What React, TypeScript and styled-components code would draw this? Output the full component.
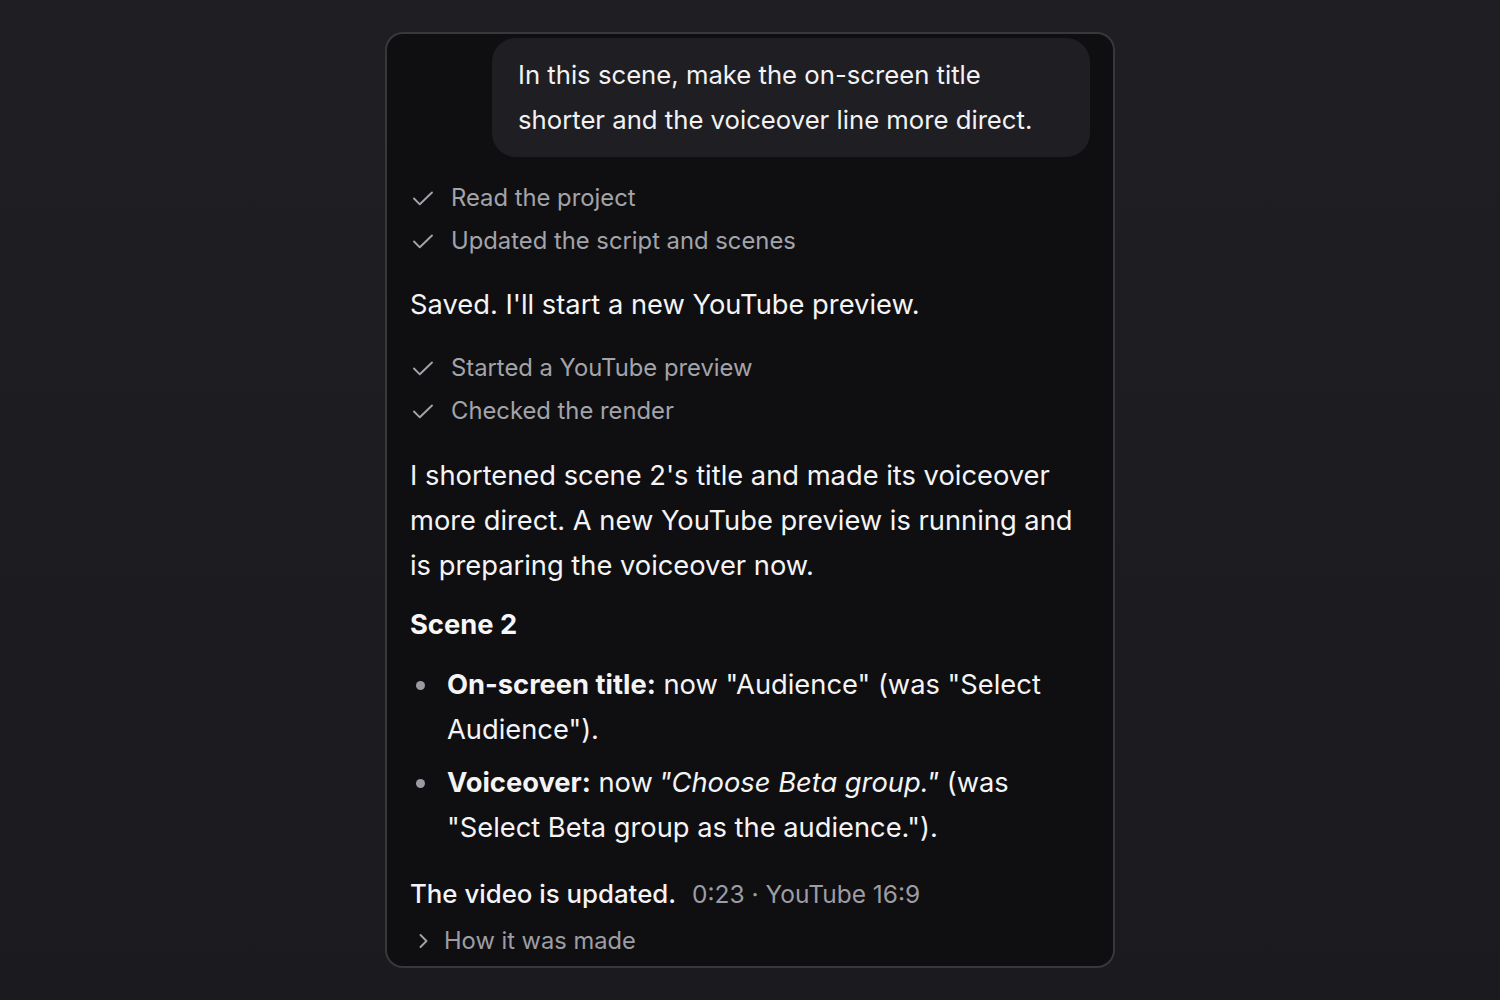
import React from "react";
import styled, { createGlobalStyle } from "styled-components";

const Global = createGlobalStyle`
  html, body { margin: 0; padding: 0; }
  body {
    background: #1d1d21;
    font-family: Inter, "Noto Sans", sans-serif;
    -webkit-font-smoothing: antialiased;
  }
`;

const Page = styled.div`
  width: 1500px;
  height: 1000px;
  display: flex;
  justify-content: center;
  padding-top: 32px;
  box-sizing: border-box;
  background: linear-gradient(180deg, #1f1f23 0%, #1b1b1f 100%);
`;

const Card = styled.div`
  width: 730px;
  height: 936px;
  box-sizing: border-box;
  border: 2px solid #37373c;
  border-radius: 18px;
  background: #0f0f11;
  padding: 4px 23px 0 23px;
  overflow: hidden;
  display: flex;
  flex-direction: column;
  color: #f2f2f4;
`;

const Bubble = styled.div`
  align-self: flex-end;
  width: 598px;
  box-sizing: border-box;
  background: #1f1f23;
  border-radius: 24px;
  padding: 14px 26px 15px 26px;
  font-size: 25.7px;
  line-height: 45px;
  color: #f2f2f4;
`;

const Steps = styled.ul<{ $mt: number }>`
  list-style: none;
  margin: ${(p) => p.$mt}px 0 0 0;
  padding: 0;
  display: flex;
  flex-direction: column;
`;

const Step = styled.li`
  display: flex;
  align-items: center;
  gap: 16px;
  height: 43px;
  font-size: 23.8px;
  color: #a3a3aa;
  padding-left: 1px;
`;

const Para = styled.p<{ $mt: number }>`
  margin: ${(p) => p.$mt}px 0 0 0;
  font-size: 27.3px;
  line-height: 45px;
  color: #f4f4f6;
`;

const Heading = styled.h3`
  margin: 14px 0 0 0;
  font-size: 27.3px;
  line-height: 45px;
  font-weight: 700;
  color: #f7f7f9;
`;

const Bullets = styled.ul`
  list-style: none;
  margin: 15px 0 0 0;
  padding: 0;
  display: flex;
  flex-direction: column;
  gap: 8px;
`;

const Bullet = styled.li`
  position: relative;
  padding-left: 37px;
  font-size: 27.3px;
  line-height: 45px;
  color: #f4f4f6;
  &::before {
    content: "";
    position: absolute;
    left: 6px;
    top: 19px;
    width: 9px;
    height: 9px;
    border-radius: 50%;
    background: #9a9aa2;
  }
  b { font-weight: 700; }
  i { font-style: italic; margin-left: 6px; }
`;

const Result = styled.div`
  margin-top: 21px;
  display: flex;
  align-items: baseline;
  gap: 16px;
  font-size: 25.8px;
  line-height: 45px;
  color: #f4f4f6;
  font-weight: 500;
`;

const Meta = styled.span`
  font-size: 24.5px;
  font-weight: 400;
  color: #9d9da5;
`;

const Disclosure = styled.div`
  margin-top: 1px;
  display: flex;
  align-items: center;
  gap: 11px;
  height: 45px;
  font-size: 23.7px;
  color: #9d9da5;
  padding-left: 3px;
`;

const Check = () => (
  <svg width="24" height="24" viewBox="0 0 24 24" fill="none" stroke="#a3a3aa" strokeWidth="1.9" strokeLinecap="round" strokeLinejoin="round">
    <path d="M3 12.5l5.8 5.8L21 6.5" />
  </svg>
);

const Chevron = () => (
  <svg width="20" height="20" viewBox="0 0 20 20" fill="none" stroke="#a3a3aa" strokeWidth="1.9" strokeLinecap="round" strokeLinejoin="round">
    <path d="M7.5 4l6 6-6 6" />
  </svg>
);

export default function App() {
  return (
    <>
      <Global />
      <Page>
        <Card>
          <Bubble>
            In this scene, make the on-screen title shorter and the voiceover line more direct.
          </Bubble>
          <Steps $mt={19}>
            <Step><Check />Read the project</Step>
            <Step><Check />Updated the script and scenes</Step>
          </Steps>
          <Para $mt={20}>Saved. I'll start a new YouTube preview.</Para>
          <Steps $mt={19}>
            <Step><Check />Started a YouTube preview</Step>
            <Step><Check />Checked the render</Step>
          </Steps>
          <Para $mt={21}>
            I shortened scene 2's title and made its voiceover more direct. A new YouTube preview is running and is preparing the voiceover now.
          </Para>
          <Heading>Scene 2</Heading>
          <Bullets>
            <Bullet>
              <b>On-screen title:</b> now "Audience" (was "Select Audience").
            </Bullet>
            <Bullet>
              <b>Voiceover:</b> now<i>"Choose Beta group."</i> (was "Select Beta group as the audience.").
            </Bullet>
          </Bullets>
          <Result>
            The video is updated.
            <Meta>0:23 · YouTube 16:9</Meta>
          </Result>
          <Disclosure><Chevron />How it was made</Disclosure>
        </Card>
      </Page>
    </>
  );
}
